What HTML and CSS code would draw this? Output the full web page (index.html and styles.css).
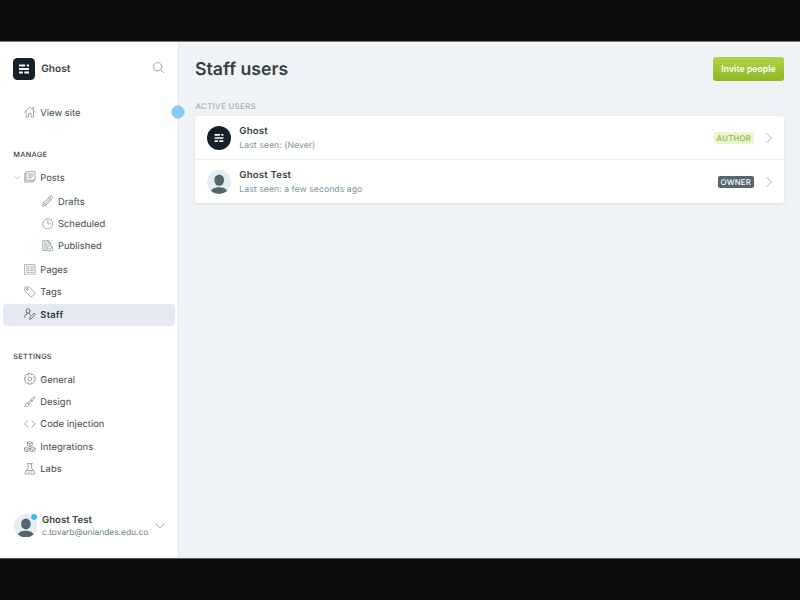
FILE: index.html
```html
<!DOCTYPE html>
<html lang="en">
<head>
<meta charset="utf-8">
<title>Staff users</title>
<link rel="stylesheet" href="styles.css">
</head>
<body>
<svg width="0" height="0" class="defs">
  <symbol id="logo" viewBox="0 0 22 22"><path d="M6 6.500h6v2H6zM13.700 6.500h2.300v2h-2.300zM6 10h10v2H6zM6 13.500h3.800v2H6zM11.300 13.500H16v2h-4.700z"/></symbol>
  <symbol id="right" viewBox="0 0 8 12"><path d="M1.500 1.200 6.600 6 1.500 10.800"/></symbol>
  <symbol id="down" viewBox="0 0 10 6"><path d="M.8 .8 5 4.900 9.200 .8"/></symbol>
  <symbol id="person" viewBox="0 0 24 24"><circle cx="12" cy="12" r="12" fill="#e3edf2"/><ellipse cx="12.200" cy="10.200" rx="4.900" ry="5.600" fill="#54666d"/><path d="M4 20.900c1-2.800 4.800-3.700 8-3.700s7 .9 8 3.700a12 12 0 0 1-16 0z" fill="#54666d"/></symbol>
</svg>
<div class="app">
  <aside class="sidebar">
    <header class="brand">
      <svg class="brand-logo" viewBox="0 0 22 22"><use href="#logo"/></svg>
      <span class="brand-name">Ghost</span>
      <svg class="icon search" viewBox="0 0 12 12"><circle cx="5" cy="5" r="4.300"/><path d="m8.100 8.100 3.300 3.300"/></svg>
    </header>
    <nav>
      <a class="item view"><svg class="icon" viewBox="0 0 12 12"><path d="M.7 6.300 6 1l5.300 5.300M2.200 5v6.300h2.500V7.600h2.600v3.700h2.500V5M8.500 1.500h1.300v2"/></svg>View site</a>
      <h2 class="label">Manage</h2>
      <a class="item posts"><svg class="icon caret" viewBox="0 0 10 6"><use href="#down"/></svg><svg class="icon" viewBox="0 0 12 12"><path d="M2.500 .8h8.800v8.700H2.500zM2.500 2.500H.8v8.800h8.900V9.500M4.500 3.200h4.800M4.500 5.100h4.800M4.500 7h3"/></svg>Posts</a>
      <a class="item sub"><svg class="icon" viewBox="0 0 12 12"><path d="m.7 11.300.9-3.400 6.500-6.500q1.100-1.100 2.300 0t.2 2.300L4.100 10.300zM1.600 7.900l2.500 2.400M7.200 2.300l2.500 2.500M3 9l5.500-5.500"/></svg>Drafts</a>
      <a class="item sub"><svg class="icon" viewBox="0 0 12 12"><circle cx="6" cy="6" r="5.200"/><path d="M6 2.700V6h2.700"/></svg>Scheduled</a>
      <a class="item sub"><svg class="icon" viewBox="0 0 12 12"><path d="M5 10.700H.8V.8h5.700l2.200 2.100v2M6.200 .8v2.400h2.500M2.500 3.200h2M2.500 5.200h3.500M2.500 7.200h2M2.500 9.100h1.700"/><circle cx="8.500" cy="8.500" r="2.900"/><path d="m7.200 8.500 1 1 1.700-2"/></svg>Published</a>
      <a class="item pages"><svg class="icon" viewBox="0 0 12 12"><path d="M.7 .8h10.600v10.500H.7zM2.700 3.100h2.600M2.700 5h2.600M2.700 6.900h2.600M2.700 8.900h2.600M6.800 3.100h2.600M6.800 5h2.600M6.800 6.900h2.600M6.800 8.900h2.600"/></svg>Pages</a>
      <a class="item"><svg class="icon" viewBox="0 0 12 12"><path d="M.9 1.500Q.9 .9 1.500 .9l3.900.3 5.800 5.800q.4.400 0 .8l-3.300 3.400q-.4.400-.8 0L1.200 5.400z"/><circle cx="3.400" cy="3.400" r=".9"/></svg>Tags</a>
      <a class="item active"><svg class="icon" viewBox="0 0 12 12"><ellipse cx="4.200" cy="3" rx="1.900" ry="2.300"/><path d="M.5 9.500c0-2 .7-2.500 2.600-3.200V5M5.300 5v1.300l1.100.5M5.800 11.300l.5-2 3.300-3.300q.9-.8 1.600 0t0 1.500L7.800 10.700z"/></svg>Staff</a>
      <h2 class="label settings">Settings</h2>
      <a class="item general"><svg class="icon" viewBox="0 0 12 12"><path d="M4.700 .5h2.600l.3 1.600 1.500-1 1.800 1.800-1 1.500 1.600.3v2.600l-1.600.3 1 1.500-1.800 1.800-1.500-1-.3 1.600H4.700l-.3-1.600-1.500 1-1.800-1.800 1-1.500-1.600-.3V4.700l1.600-.3-1-1.500 1.800-1.800 1.500 1z"/><circle cx="6" cy="6" r="2"/></svg>General</a>
      <a class="item"><svg class="icon" viewBox="0 0 12 12"><path d="M4 7.200 9.700 1.100q.9-.7 1.400-.2t-.2 1.400L5.100 8.300zM4 7.200c-2-.5-2.400 1-2.400 2.200q0 1-.9 1.700c2.500.5 4.700-.2 4.400-2.800M7.100 3.900l1.200 1.200"/></svg>Design</a>
      <a class="item"><svg class="icon" viewBox="0 0 12 12"><path d="M3.900 2.700.6 6l3.300 3.300M8.100 2.700 11.400 6 8.100 9.300"/></svg>Code injection</a>
      <a class="item"><svg class="icon" viewBox="0 0 12 12"><path d="m6 .5 2.500 1.200v2.700L6 5.700 3.500 4.400V1.700zM3.500 1.700 6 2.900l2.500-1.200M6 2.900v2.800M3 6.300l2.500 1.200v2.700L3 11.400.5 10.200V7.500zM.5 7.500 3 8.700l2.500-1.200M3 8.700v2.700M9 6.300l2.500 1.200v2.700L9 11.400l-2.500-1.200V7.500zM6.500 7.500 9 8.700l2.500-1.200M9 8.700v2.700"/></svg>Integrations</a>
      <a class="item"><svg class="icon" viewBox="0 0 12 12"><path d="M3.300 .7h5.400M4.200 .7v4.200L1 10.100q-.5 1.200.7 1.200h8.600q1.200 0 .7-1.200L7.800 4.900V.7M2.500 7.700h7M4.500 9.500h.6M7.200 9.200h.6"/></svg>Labs</a>
    </nav>
    <footer class="account">
      <div class="face"><svg viewBox="0 0 24 24"><use href="#person"/></svg><i class="dot"></i></div>
      <div class="who"><b>Ghost Test</b><span>c.tovarb@uniandes.edu.co</span></div>
      <svg class="icon expand" viewBox="0 0 10 6"><use href="#down"/></svg>
    </footer>
    <i class="pointer"></i>
  </aside>
  <main class="main">
    <header class="top"><h1>Staff users</h1><button>Invite people</button></header>
    <h2 class="group">Active users</h2>
    <section class="card">
      <div class="user">
        <svg class="avatar ghost" viewBox="0 0 22 22"><use href="#logo" x="2.200" y="2.200" width="17.600" height="17.600"/></svg>
        <div class="info"><b>Ghost</b><span>Last seen: (Never)</span></div>
        <em class="badge author">Author</em>
        <svg class="go" viewBox="0 0 8 12"><use href="#right"/></svg>
      </div>
      <div class="user">
        <svg class="avatar" viewBox="0 0 24 24"><use href="#person"/></svg>
        <div class="info"><b>Ghost Test</b><span>Last seen: a few seconds ago</span></div>
        <em class="badge owner">Owner</em>
        <svg class="go" viewBox="0 0 8 12"><use href="#right"/></svg>
      </div>
    </section>
  </main>
</div>
</body>
</html>
```
FILE: styles.css
```css
* { box-sizing: border-box; }
body {
  margin: 0;
  height: 600px;
  padding: 41px 0;
  overflow: hidden;
  background: #0d0d0d;
  color: #343f44;
  font-family: Inter, "Liberation Sans", sans-serif;
  font-size: 9.500px;
  text-rendering: geometricPrecision;
}
h1, h2 { margin: 0; }
svg { display: block; flex: none; }
.defs { position: absolute; }
.app { display: flex; height: 518px; border-top: 1px solid #77797a; border-bottom: 1px solid #55585a; }
.sidebar {
  position: relative;
  display: flex;
  flex-direction: column;
  width: 179px;
  background: #fff;
  border-right: 1px solid #dfe6eb;
}
.brand { display: flex; align-items: center; height: 22px; margin: 15.500px 14px 22px 13px; }
.brand-logo { width: 22px; height: 22px; background: #15212a; border-radius: 4.500px; fill: #fff; }
.brand-name { flex: 1; margin: 1px 0 0 6.200px; font-size: 10.200px; font-weight: 600; }
.icon { width: 12px; height: 12px; fill: none; stroke: #7c919c; stroke-width: .8; stroke-linejoin: round; stroke-linecap: round; }
.search { width: 11.500px; height: 11.500px; margin-top: -1px; }
.item {
  display: flex;
  align-items: center;
  gap: 4.600px;
  height: 22.400px;
  padding: 1px 0 0 24px;
  color: #3d4a50;
  font-size: 9.400px;
  font-weight: 400;
  letter-spacing: .03px;
}
.item .icon { width: 11.700px; height: 11.700px; margin-bottom: 2px; }
.label { height: 12px; margin-left: 13.300px; font-size: 7.300px; line-height: 12px; font-weight: 500; letter-spacing: .28px; text-transform: uppercase; color: #343f44; }
.view { margin-bottom: 25.500px; }
.posts { margin: 5.200px 0 1.400px; padding-left: 14px; gap: 3.500px; }
.item.posts .caret { width: 6.500px; height: 5px; stroke: #a3b2ba; stroke-width: 1.100; }
.posts .icon:nth-child(2) { margin-right: 1px; }
.sub { padding-left: 41.600px; }
.pages { margin-top: 1.300px; }
.active { height: 22px; margin: 0 3px; padding-left: 21px; background: #e5eaf2; border-radius: 3.500px; color: #2d383d; font-weight: 600; letter-spacing: .25px; }
.active .icon { stroke: #48565d; }
.settings { margin-top: 25.300px; }
.general { margin-top: 5.600px; }
.account { display: flex; align-items: center; margin: auto 14px 19.500px 13.500px; height: 26px; }
.face { position: relative; width: 23.500px; height: 23.500px; }
.face svg { width: 23.500px; height: 23.500px; }
.dot { position: absolute; top: -.5px; right: -1px; width: 8px; height: 8px; background: #3eb0ef; border: .5px solid #fff; border-radius: 50%; }
.who { flex: 1; margin-left: 5px; padding-top: 3.500px; white-space: nowrap; }
.who b, .info b { display: block; font-size: 9.600px; font-weight: 600; line-height: 12px; letter-spacing: 0; }
.info b { letter-spacing: .2px; }
.who span { display: block; font-size: 8.400px; line-height: 13px; color: #627a85; }
.expand { width: 10px; height: 6px; margin-right: -.5px; }
.pointer { position: absolute; left: 171px; top: 63px; width: 14px; height: 14px; border: 1px solid #b3dcf6; border-radius: 50%; background: #85c9f5; }
.main { flex: 1; padding: 15px 16px 0; background: #eff3f6; }
.top { display: flex; align-items: center; justify-content: space-between; height: 24px; }
.top h1 { font-size: 17.700px; font-weight: 600; line-height: 24px; margin-top: 1px; }
.top button { width: 71px; height: 24px; padding: 0; border: 0; border-radius: 3px; background: linear-gradient(#afd34a, #8cb825); color: #fff; font: 600 8.500px Inter, sans-serif; letter-spacing: .12px; }
.group { margin: 19px 0 0 .5px; font-size: 7.800px; line-height: 12px; font-weight: 500; letter-spacing: .35px; text-transform: uppercase; color: #a0b0b9; }
.card { margin-top: 4px; border-radius: 3px; background: #fff; box-shadow: 0 1px 3px rgba(60,80,90,.14); }
.user { display: flex; align-items: center; height: 43px; padding: 0 11.500px 0 12.300px; }
.user + .user { height: 44px; border-top: 1px solid #eaf0f3; }
.avatar { width: 24px; height: 24px; }
.ghost { border-radius: 50%; background: #15212a; fill: #fff; }
.info { flex: 1; margin-left: 8px; padding-top: 3px; }
.info b { line-height: 14px; }
.info span { display: block; font-size: 8.700px; line-height: 14px; color: #80949e; letter-spacing: .04px; }
.badge { padding: 0 3px; border-radius: 2px; font-size: 7.800px; line-height: 12px; font-style: normal; font-weight: 500; letter-spacing: .22px; text-transform: uppercase; }
.author { background: #e9f4d3; color: #8bb834; }
.owner { background: #54666f; color: #fff; }
.go { width: 8px; height: 12px; margin-left: 10.500px; fill: none; stroke: #94a6af; stroke-width: .8; }
```
